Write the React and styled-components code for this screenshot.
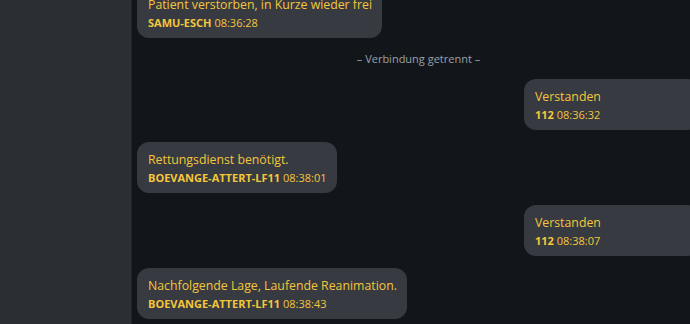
import styled, { createGlobalStyle } from 'styled-components'

const GlobalStyle = createGlobalStyle`
  html, body {
    margin: 0;
    padding: 0;
    height: 100%;
    overflow: hidden;
    background: #12161b;
    font-family: "Open Sans", "Noto Sans", sans-serif;
  }
  #root {
    height: 100%;
  }
`

const Layout = styled.div`
  display: flex;
  height: 324px;
  overflow: hidden;
`

const Sidebar = styled.aside`
  flex: 0 0 131px;
  background: #2b2f33;
  border-right: 1px solid #1f2327;
`

const ChatPane = styled.main`
  flex: 1;
  min-width: 0;
  overflow: hidden;
  background: #12161b;
`

const MessageList = styled.div`
  display: flex;
  flex-direction: column;
  gap: 12px;
  margin-top: -13px;
  margin-right: -10px;
  padding-left: 5px;
`

const Row = styled.div`
  display: flex;
  justify-content: ${p => (p.$mine ? 'flex-end' : 'flex-start')};
`

const Bubble = styled.div`
  box-sizing: border-box;
  padding: 8px 10px 8px 11px;
  border-radius: 12px;
  background: #373a40;
  color: #f4c63c;
  max-width: 80%;
  ${p => p.$mine && 'min-width: 176px;'}
`

const Text = styled.div`
  font-size: 12.3px;
  line-height: 19px;
`

const Meta = styled.div`
  font-size: 11px;
  line-height: 16px;
  padding-top: 1px;
  margin-bottom: -1px;
`

const Sender = styled.span`
  font-weight: 700;
`

const SystemNote = styled.div`
  text-align: center;
  color: #9aa0a6;
  font-size: 11px;
  line-height: 17px;
`

const messages = [
  { type: 'msg', text: 'Patient verstorben, in Kurze wieder frei', sender: 'SAMU-ESCH', time: '08:36:28' },
  { type: 'system', text: '– Verbindung getrennt –' },
  { type: 'msg', mine: true, text: 'Verstanden', sender: '112', time: '08:36:32' },
  { type: 'msg', text: 'Rettungsdienst benötigt.', sender: 'BOEVANGE-ATTERT-LF11', time: '08:38:01' },
  { type: 'msg', mine: true, text: 'Verstanden', sender: '112', time: '08:38:07' },
  { type: 'msg', text: 'Nachfolgende Lage, Laufende Reanimation.', sender: 'BOEVANGE-ATTERT-LF11', time: '08:38:43' },
]

const App = () => {
  return (
    <>
      <GlobalStyle />
      <Layout>
        <Sidebar />
        <ChatPane>
          <MessageList>
            {messages.map((m, i) =>
              m.type === 'system' ? (
                <SystemNote key={i}>{m.text}</SystemNote>
              ) : (
                <Row key={i} $mine={m.mine}>
                  <Bubble $mine={m.mine}>
                    <Text>{m.text}</Text>
                    <Meta>
                      <Sender>{m.sender}</Sender> {m.time}
                    </Meta>
                  </Bubble>
                </Row>
              )
            )}
          </MessageList>
        </ChatPane>
      </Layout>
    </>
  )
}

export default App
